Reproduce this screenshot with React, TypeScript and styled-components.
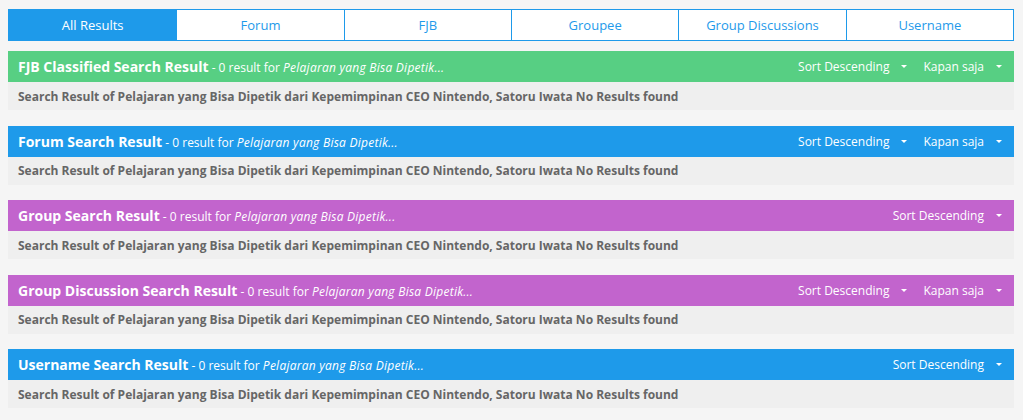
import React from "react";
import styled, { createGlobalStyle } from "styled-components";

const GlobalStyle = createGlobalStyle`
  body {
    margin: 0;
    background: #f5f5f5;
    font-family: "Open Sans", "Liberation Sans", sans-serif;
  }
`;

const Page = styled.div`
  padding: 9px 9px 0 8px;
`;

const Tabs = styled.div`
  display: grid;
  grid-template-columns: repeat(6, 1fr);
  border: 1px solid #1e9aea;
  background: #fff;
  margin-bottom: 10px;
`;

const Tab = styled.div<{ $active?: boolean }>`
  height: 30px;
  display: flex;
  align-items: center;
  justify-content: center;
  font-size: 13px;
  color: ${(p) => (p.$active ? "#fff" : "#1e9aea")};
  background: ${(p) => (p.$active ? "#1e9aea" : "#fff")};
  & + & {
    border-left: 1px solid #1e9aea;
  }
`;

const Section = styled.div`
  margin-bottom: 15.5px;
`;

const Header = styled.div<{ $color: string }>`
  background: ${(p) => p.$color};
  height: 31px;
  display: flex;
  align-items: center;
  padding: 0 12px 0 10px;
  color: #fff;
`;

const Title = styled.div`
  flex: 1;
  font-size: 12px;
  b {
    font-size: 14px;
    font-weight: 700;
  }
  i {
    font-style: italic;
    letter-spacing: 0.25px;
  }
`;

const Dropdowns = styled.div`
  display: flex;
  gap: 16px;
`;

const Dropdown = styled.div`
  font-size: 12px;
  display: flex;
  align-items: center;
  gap: 12px;
`;

const Caret = styled.span`
  width: 0;
  height: 0;
  border-left: 3px solid transparent;
  border-right: 3px solid transparent;
  border-top: 3px solid #fff;
`;

const Body = styled.div`
  background: #efefef;
  height: 28px;
  display: flex;
  align-items: center;
  padding: 0 10px;
  font-size: 12px;
  font-weight: 700;
  color: #666;
`;

const tabs = ["All Results", "Forum", "FJB", "Groupee", "Group Discussions", "Username"];

const sections = [
  { title: "FJB Classified Search Result", color: "#57cf83", when: true },
  { title: "Forum Search Result", color: "#1e9aea", when: true },
  { title: "Group Search Result", color: "#c264cd", when: false },
  { title: "Group Discussion Search Result", color: "#c264cd", when: true },
  { title: "Username Search Result", color: "#1e9aea", when: false },
];

export default function App() {
  return (
    <>
      <GlobalStyle />
      <Page>
        <Tabs>
          {tabs.map((t, i) => (
            <Tab key={t} $active={i === 0}>
              {t}
            </Tab>
          ))}
        </Tabs>
        {sections.map((s) => (
          <Section key={s.title}>
            <Header $color={s.color}>
              <Title>
                <b>{s.title}</b> - 0 result for <i>Pelajaran yang Bisa Dipetik...</i>
              </Title>
              <Dropdowns>
                <Dropdown>
                  Sort Descending <Caret />
                </Dropdown>
                {s.when && (
                  <Dropdown>
                    Kapan saja <Caret />
                  </Dropdown>
                )}
              </Dropdowns>
            </Header>
            <Body>
              Search Result of Pelajaran yang Bisa Dipetik dari Kepemimpinan CEO Nintendo, Satoru Iwata No Results found
            </Body>
          </Section>
        ))}
      </Page>
    </>
  );
}
